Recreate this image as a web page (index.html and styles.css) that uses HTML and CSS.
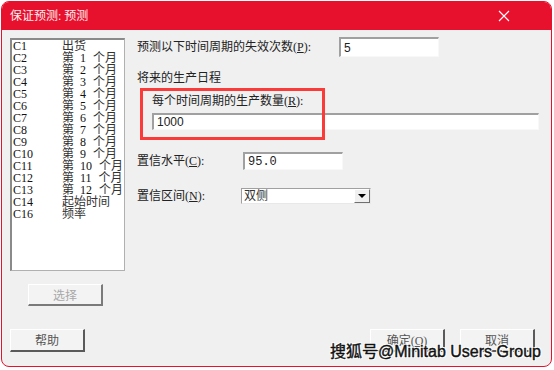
FILE: index.html
```html
<!DOCTYPE html>
<html lang="zh-CN">
<head>
    <meta charset="UTF-8">
    <meta name="viewport" content="width=device-width, initial-scale=1.0">
    <title>保证预测: 预测</title>
    <link rel="stylesheet" href="styles.css">
</head>
<body>

    <div class="window">
        <div class="titlebar">
            <span class="title">保证预测: 预测</span>
            <svg class="close" width="12" height="12" viewBox="0 0 12 12">
                <path d="M1 1 L11 11 M11 1 L1 11" stroke="#fff" stroke-width="1.1" fill="none"/>
            </svg>
        </div>

        <div class="dialog">
            <div class="main">
                <div class="left">
                    <div class="varlist">
                        <div class="var"><span class="vcol">C1</span><span>出货</span></div>
                        <div class="var"><span class="vcol">C2</span><span class="di">第</span><span class="num">1</span><span>个月</span></div>
                        <div class="var"><span class="vcol">C3</span><span class="di">第</span><span class="num">2</span><span>个月</span></div>
                        <div class="var"><span class="vcol">C4</span><span class="di">第</span><span class="num">3</span><span>个月</span></div>
                        <div class="var"><span class="vcol">C5</span><span class="di">第</span><span class="num">4</span><span>个月</span></div>
                        <div class="var"><span class="vcol">C6</span><span class="di">第</span><span class="num">5</span><span>个月</span></div>
                        <div class="var"><span class="vcol">C7</span><span class="di">第</span><span class="num">6</span><span>个月</span></div>
                        <div class="var"><span class="vcol">C8</span><span class="di">第</span><span class="num">7</span><span>个月</span></div>
                        <div class="var"><span class="vcol">C9</span><span class="di">第</span><span class="num">8</span><span>个月</span></div>
                        <div class="var"><span class="vcol">C10</span><span class="di">第</span><span class="num">9</span><span>个月</span></div>
                        <div class="var"><span class="vcol">C11</span><span class="di">第</span><span class="num">10</span><span>个月</span></div>
                        <div class="var"><span class="vcol">C12</span><span class="di">第</span><span class="num">11</span><span>个月</span></div>
                        <div class="var"><span class="vcol">C13</span><span class="di">第</span><span class="num">12</span><span>个月</span></div>
                        <div class="var"><span class="vcol">C14</span><span>起始时间</span></div>
                        <div class="var"><span class="vcol">C16</span><span>频率</span></div>
                    </div>
                    <button class="btn btn-select" disabled>选择</button>
                </div>

                <div class="right">
                    <div class="row row-first">
                        <label class="lbl lbl-wide" for="periods">预测以下时间周期的失效次数(<u>P</u>):</label>
                        <input class="field field-short" id="periods" value="5">
                    </div>

                    <div class="section-title">将来的生产日程</div>

                    <div class="group">
                        <label class="lbl" for="qty">每个时间周期的生产数量(<u>R</u>):</label>
                        <input class="field field-long" id="qty" value="1000">
                        <div class="highlight"></div>
                    </div>

                    <div class="row row-conf">
                        <label class="lbl lbl-conf" for="conf">置信水平(<u>C</u>):</label>
                        <input class="field field-conf" id="conf" value="95.0">
                    </div>

                    <div class="row row-interval">
                        <label class="lbl lbl-interval">置信区间(<u>N</u>):</label>
                        <div class="combo">
                            <span class="combo-text">双侧</span>
                            <span class="combo-btn"><span class="arrow"></span></span>
                        </div>
                    </div>
                </div>
            </div>

            <div class="footer">
                <button class="btn">帮助</button>
                <div class="footer-right">
                    <button class="btn">确定(<u>O</u>)</button>
                    <button class="btn">取消</button>
                </div>
            </div>
        </div>

        <div class="watermark">搜狐号@Minitab Users Group</div>
    </div>

</body>
</html>
```

FILE: styles.css
```css
* {
    box-sizing: border-box;
}
body {
    margin: 0;
    background: #fff;
    font-family: "Liberation Serif", "Noto Sans CJK SC", serif;
    font-size: 12px;
    color: #222;
}
.window {
    position: relative;
    margin: 1px;
    width: 551px;
    height: 366px;
    border: 1px solid #e8112d;
    border-radius: 8px;
    background: #f0f0f0;
    overflow: hidden;
}
.titlebar {
    height: 28px;
    background: #e8112d;
    display: flex;
    align-items: center;
    justify-content: space-between;
    padding: 0 41px 0 8px;
}
.title {
    color: #fdeef0;
    font-size: 12px;
    line-height: 14px;
}
.close {
    display: block;
}
.dialog {
    height: 336px;
    display: flex;
    flex-direction: column;
    padding: 8px 0 0 8px;
}
.main {
    display: flex;
    flex: 1;
}
.left {
    width: 115px;
}
.varlist {
    height: 233px;
    background: #fff;
    border-style: solid;
    border-width: 2px 1px 1px 2px;
    border-color: #8a8a8a #b0b0b0 #b0b0b0 #8a8a8a;
    padding: 0 0 0 1px;
    overflow: hidden;
}
.var {
    display: flex;
    height: 12px;
    line-height: 12px;
    color: #333;
    white-space: nowrap;
}
.vcol {
    flex: none;
    width: 49px;
    color: #111;
}
.di {
    flex: none;
    width: 18px;
}
.num {
    flex: none;
    margin-right: 7px;
    color: #111;
}
.btn {
    width: 75px;
    height: 23px;
    font-family: "Liberation Serif", "Noto Sans CJK SC", serif;
    font-size: 12px;
    color: #555;
    background: #f3f3f3;
    border-style: solid;
    border-width: 1px 2px 2px 1px;
    border-color: #fff #5a5a5a #5a5a5a #fff;
    padding: 0;
}
.btn-select {
    height: 22px;
    margin: 13px 0 0 18px;
    color: #a8a8a8;
    border-color: #fff #7a7a7a #7a7a7a #fff;
}
.right {
    margin-left: 12px;
    flex: 1;
}
.row {
    display: flex;
    align-items: center;
}
.row-first {
    margin-top: -1px;
}
.lbl {
    display: block;
    line-height: 16px;
}
.lbl-wide {
    width: 202px;
}
.lbl-conf {
    width: 106px;
}
.lbl-interval {
    width: 104px;
}
.field {
    font-family: "Liberation Sans", "Noto Sans CJK SC", sans-serif;
    font-size: 12px;
    color: #222;
    background: #fff;
    border-style: solid;
    border-width: 2px 1px 1px 2px;
    border-color: #a0a0a0 #f8f8f8 #f8f8f8 #a0a0a0;
    padding: 0 3px;
    outline: none;
}
.field-short {
    width: 100px;
    height: 20px;
}
.section-title {
    margin-top: 13px;
    line-height: 16px;
}
.group {
    position: relative;
    margin-top: 7px;
    padding-left: 15px;
}
.field-long {
    display: block;
    margin-top: 4px;
    width: 387px;
    height: 17px;
}
.highlight {
    position: absolute;
    left: 3px;
    top: -5px;
    width: 185px;
    height: 52px;
    border: 3px solid #fb3a3a;
}
.row-conf {
    margin-top: 22px;
}
.field-conf {
    width: 100px;
    height: 18px;
    font-family: "Liberation Mono", monospace;
}
.row-interval {
    margin-top: 18px;
}
.combo {
    display: flex;
    width: 130px;
    height: 16px;
    background: #fff;
    border-style: solid;
    border-width: 1px;
    border-color: #a0a0a0 #e8e8e8 #e8e8e8 #a0a0a0;
}
.combo-text {
    flex: 1;
    padding-left: 2px;
    line-height: 14px;
    color: #333;
}
.combo-btn {
    width: 16px;
    background: #f0f0f0;
    border-style: solid;
    border-width: 1px;
    border-color: #fff #707070 #707070 #fff;
    display: flex;
    align-items: center;
    justify-content: center;
}
.arrow {
    width: 0;
    height: 0;
    border-left: 4px solid transparent;
    border-right: 4px solid transparent;
    border-top: 4px solid #000;
}
.footer {
    display: flex;
    justify-content: space-between;
    padding: 0 16px 14px 0;
}
.footer-right {
    display: flex;
    gap: 15px;
}
.watermark {
    position: absolute;
    left: 328px;
    top: 340px;
    font-family: "Liberation Sans", "Noto Sans CJK SC", sans-serif;
    font-size: 16px;
    line-height: 20px;
    color: #111;
    -webkit-text-stroke: 0.4px #111;
    text-shadow: 1px 1px 0 #fff, -1px -1px 0 #fff, 1px -1px 0 #fff, -1px 1px 0 #fff;
    white-space: nowrap;
}
```
